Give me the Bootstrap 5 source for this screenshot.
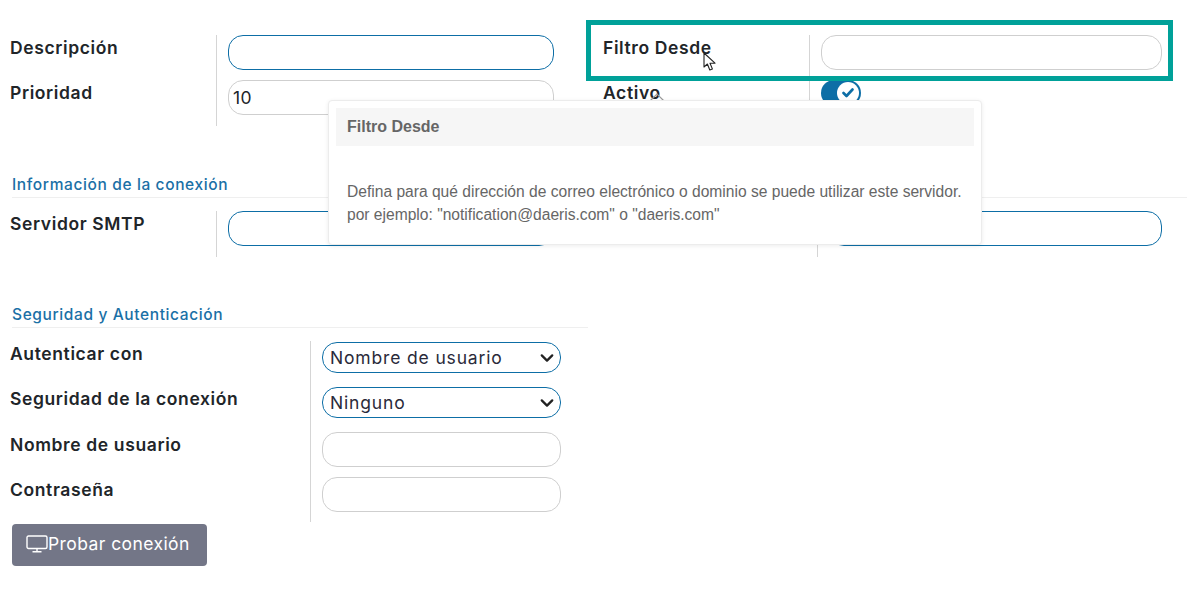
<!DOCTYPE html>
<html lang="es">
<head>
<meta charset="utf-8">
<title>Servidor de correo</title>
<link rel="stylesheet" href="https://cdn.jsdelivr.net/npm/bootstrap@5.3.0/dist/css/bootstrap.min.css">
<style>
html,body{height:593px;overflow:hidden;background:#fff}
body{font-family:"Inter","Noto Sans",sans-serif;color:#212529;position:relative}
.page-wrap{padding-top:35px}
.field-label{font-weight:600;font-size:17.5px;letter-spacing:.62px;line-height:26px;padding-left:10px;white-space:nowrap}
.label-a{width:206px;box-sizing:content-box}
.label-b{width:206px;box-sizing:content-box}
.label-c{width:224px}
.label-d{width:300px;box-sizing:content-box}
.pane-left{width:593px}
.pane-right{width:594px}
.field-cell{border-left:1px solid #d5d5d5;padding-left:11px;padding-bottom:10px}
.field-cell.tail{padding-bottom:11px}
.pane-left .field-cell{width:338px}
.pane-right .field-cell{width:353px}
.pane-right .field-cell.narrow{width:345px}
.pane-sec .field-cell{width:251px}
.pane-sec .field-cell.sel-one{padding-top:1px;padding-bottom:13px}
.pane-sec .field-cell.sel-two{padding-top:1px;padding-bottom:14px}
.pane-sec .field-cell.tail{padding-bottom:10px}
.soft-input.form-control{height:35px;border-radius:15px;border:1px solid #cfcfcf;padding:0 4px;font-size:17.5px;letter-spacing:.3px;color:#212529;box-shadow:none}
.soft-input.is-active{border-color:#0d6ea6}
.soft-select.form-select{height:31px;border-radius:15px;border:1px solid #0d6ea6;padding:0 30px 0 7px;font-size:17.5px;letter-spacing:.84px;line-height:29px;color:#2a2a3a;background-image:url("data:image/svg+xml,%3csvg xmlns='http://www.w3.org/2000/svg' viewBox='0 0 16 16'%3e%3cpath fill='none' stroke='%23222' stroke-linecap='round' stroke-linejoin='round' stroke-width='2.6' d='m2 5 6 6 6-6'/%3e%3c/svg%3e");background-position:right 6px center;background-size:14px 14px}
.section-head{font-size:15.5px;font-weight:500;letter-spacing:.62px;color:#1a70a6;line-height:20px;border-bottom:1px solid #efefef;margin-left:12px;padding-bottom:2px;margin-bottom:13px}
.head-one{margin-top:49px}
.head-two{margin-top:48px;width:576px;margin-bottom:13px}
.toggle-on{display:flex;align-items:center;justify-content:flex-end;width:40px;height:26px;border-radius:13px;background:#0d6ea6;padding-right:2px}
.toggle-knob{display:flex;align-items:center;justify-content:center;width:22px;height:22px;border-radius:50%;background:#fff}
.toggle-cell{padding-bottom:9px!important}
.test-btn.btn{display:inline-flex;align-items:center;margin:2px 0 0 12px;width:195px;height:42px;background:#737687;border:0;border-radius:4px;color:#fff;font-size:17.5px;letter-spacing:.42px;padding:0 0 2px 14px;white-space:nowrap}
.frame-mark{position:absolute;left:586px;top:20px;width:587px;height:61px;border:5px solid #00a199;pointer-events:none}
.tip-box.popover{position:absolute;left:328px;top:100px;width:654px;max-width:none;height:145px;padding:7px;background:#fff;border:1px solid #ececec;border-radius:4px;box-shadow:0 1px 4px rgba(0,0,0,.08);font-family:"Liberation Sans",Arial,sans-serif;color:#666}
.tip-box .popover-header{background:#f6f6f6;border:0;border-radius:0;height:38px;padding:0 11px;font-size:16px;line-height:38px;font-weight:700;color:#666;font-family:inherit}
.tip-box .popover-body{padding:34px 11px 0;font-size:15.6px;line-height:23px;color:#666;white-space:nowrap}
.tip-caret{position:absolute;left:648px;top:92px;width:18px;height:9px}
.cursor-mark{position:absolute;left:703px;top:52px;width:15px;height:19px}
</style>
</head>
<body>
<div class="page-wrap">
  <div class="d-flex">
    <div class="pane-left">
      <div class="d-flex">
        <div class="field-label label-a">Descripción</div>
        <div class="field-cell"><input class="form-control soft-input is-active" type="text"></div>
      </div>
      <div class="d-flex">
        <div class="field-label label-a">Prioridad</div>
        <div class="field-cell tail"><input class="form-control soft-input" type="text" value="10"></div>
      </div>
    </div>
    <div class="pane-right">
      <div class="d-flex">
        <div class="field-label label-b">Filtro Desde</div>
        <div class="field-cell"><input class="form-control soft-input" type="text"></div>
      </div>
      <div class="d-flex">
        <div class="field-label label-b">Activo</div>
        <div class="field-cell tail toggle-cell">
          <span class="toggle-on"><span class="toggle-knob">
            <svg width="12" height="10" viewBox="0 0 12 10" fill="none" stroke="#0d6ea6" stroke-width="2.6" stroke-linecap="round" stroke-linejoin="round"><path d="M1.5 5l3 3 6-6.5"/></svg>
          </span></span>
        </div>
      </div>
    </div>
  </div>

  <div class="section-head head-one">Información de la conexión</div>
  <div class="d-flex">
    <div class="pane-left">
      <div class="d-flex">
        <div class="field-label label-a">Servidor SMTP</div>
        <div class="field-cell tail"><input class="form-control soft-input is-active" type="text"></div>
      </div>
    </div>
    <div class="pane-right">
      <div class="d-flex">
        <div class="label-c"></div>
        <div class="field-cell tail narrow"><input class="form-control soft-input is-active" type="text"></div>
      </div>
    </div>
  </div>

  <div class="section-head head-two">Seguridad y Autenticación</div>
  <div class="pane-sec">
    <div class="d-flex">
      <div class="field-label label-d">Autenticar con</div>
      <div class="field-cell sel-one"><select class="form-select soft-select"><option>Nombre de usuario</option></select></div>
    </div>
    <div class="d-flex">
      <div class="field-label label-d">Seguridad de la conexión</div>
      <div class="field-cell sel-two"><select class="form-select soft-select"><option>Ninguno</option></select></div>
    </div>
    <div class="d-flex">
      <div class="field-label label-d">Nombre de usuario</div>
      <div class="field-cell"><input class="form-control soft-input" type="text"></div>
    </div>
    <div class="d-flex">
      <div class="field-label label-d">Contraseña</div>
      <div class="field-cell tail"><input class="form-control soft-input" type="password"></div>
    </div>
  </div>
  <button type="button" class="btn test-btn">
    <svg width="22" height="18" viewBox="0 0 22 18" fill="none" stroke="#fff" stroke-width="1.4"><rect x="1" y="1" width="20" height="12.5" rx="1.5"/><path d="M11 13.5v3M6.5 16.8h9"/></svg>Probar conexión
  </button>
</div>

<div class="frame-mark"></div>
<svg class="tip-caret" viewBox="0 0 18 9" fill="none" stroke="#9a9a9a" stroke-width="1.2"><path d="M2 9l7-7 7 7"/></svg>
<div class="popover tip-box">
  <h3 class="popover-header">Filtro Desde</h3>
  <div class="popover-body">Defina para qué dirección de correo electrónico o dominio se puede utilizar este servidor.<br>por ejemplo: "notification@daeris.com" o "daeris.com"</div>
</div>
<svg class="cursor-mark" viewBox="0 0 15 19"><path d="M1 1v14l3.4-3 2.4 6 2.6-1.1-2.4-5.7H12z" fill="#fff" stroke="#222" stroke-width="1.1" stroke-linejoin="round"/></svg>
<script src="https://cdn.jsdelivr.net/npm/bootstrap@5.3.0/dist/js/bootstrap.bundle.min.js"></script>
</body>
</html>
